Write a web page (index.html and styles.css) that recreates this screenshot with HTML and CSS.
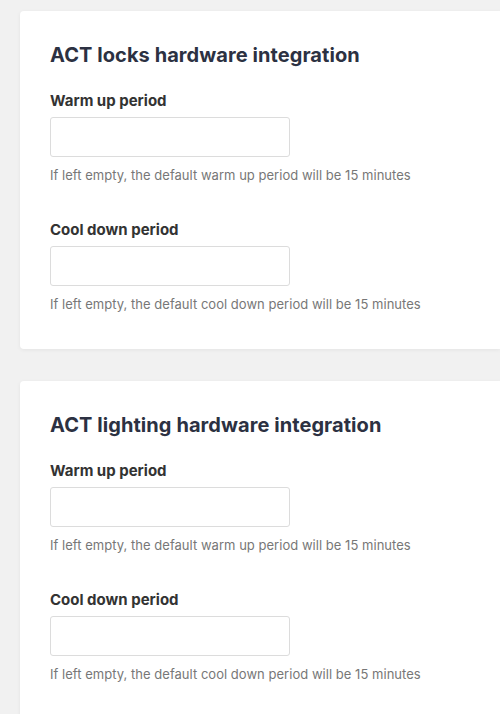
FILE: index.html
```html
<!DOCTYPE html>
<html>
<head>
<meta charset="utf-8">
<link rel="stylesheet" href="styles.css">
</head>
<body>
<div class="page">
  <section class="card">
    <h2 class="card-title">ACT locks hardware integration</h2>
    <div class="field">
      <label class="field-label">Warm up period</label>
      <input class="field-input" type="text">
      <p class="field-help">If left empty, the default warm up period will be 15 minutes</p>
    </div>
    <div class="field">
      <label class="field-label">Cool down period</label>
      <input class="field-input" type="text">
      <p class="field-help">If left empty, the default cool down period will be 15 minutes</p>
    </div>
  </section>
  <section class="card">
    <h2 class="card-title">ACT lighting hardware integration</h2>
    <div class="field">
      <label class="field-label">Warm up period</label>
      <input class="field-input" type="text">
      <p class="field-help">If left empty, the default warm up period will be 15 minutes</p>
    </div>
    <div class="field">
      <label class="field-label">Cool down period</label>
      <input class="field-input" type="text">
      <p class="field-help">If left empty, the default cool down period will be 15 minutes</p>
    </div>
  </section>
</div>
</body>
</html>
```

FILE: styles.css
```css
html, body {
  margin: 0;
  padding: 0;
  background: #f1f1f1;
  font-family: Inter, "Noto Sans", sans-serif;
  overflow: hidden;
}
.page {
  padding: 11px 0 0 20px;
  display: flex;
  flex-direction: column;
  gap: 32px;
}
.card {
  background: #fff;
  border-radius: 4px 0 0 4px;
  box-shadow: 0 1px 4px rgba(0, 0, 0, 0.06);
  padding: 30px 30px 36px 30px;
  display: flex;
  flex-direction: column;
}
.card-title {
  margin: 0 0 22px 0;
  font-size: 20px;
  line-height: 28px;
  font-weight: 700;
  letter-spacing: 0.07px;
  color: #2c3142;
}
.field {
  display: flex;
  flex-direction: column;
  align-items: flex-start;
}
.field + .field {
  margin-top: 36px;
}
.field-label {
  font-size: 15px;
  line-height: 20px;
  font-weight: 700;
  color: #333;
  margin-bottom: 6px;
}
.field-input {
  box-sizing: border-box;
  width: 240px;
  height: 40px;
  border: 1px solid #dcdcdc;
  border-radius: 3px;
  background: #fff;
  margin: 0;
  padding: 0 10px;
  font-family: inherit;
}
.field-help {
  margin: 9px 0 0 0;
  font-size: 13px;
  line-height: 18px;
  letter-spacing: 0.03px;
  color: #777;
}
```
